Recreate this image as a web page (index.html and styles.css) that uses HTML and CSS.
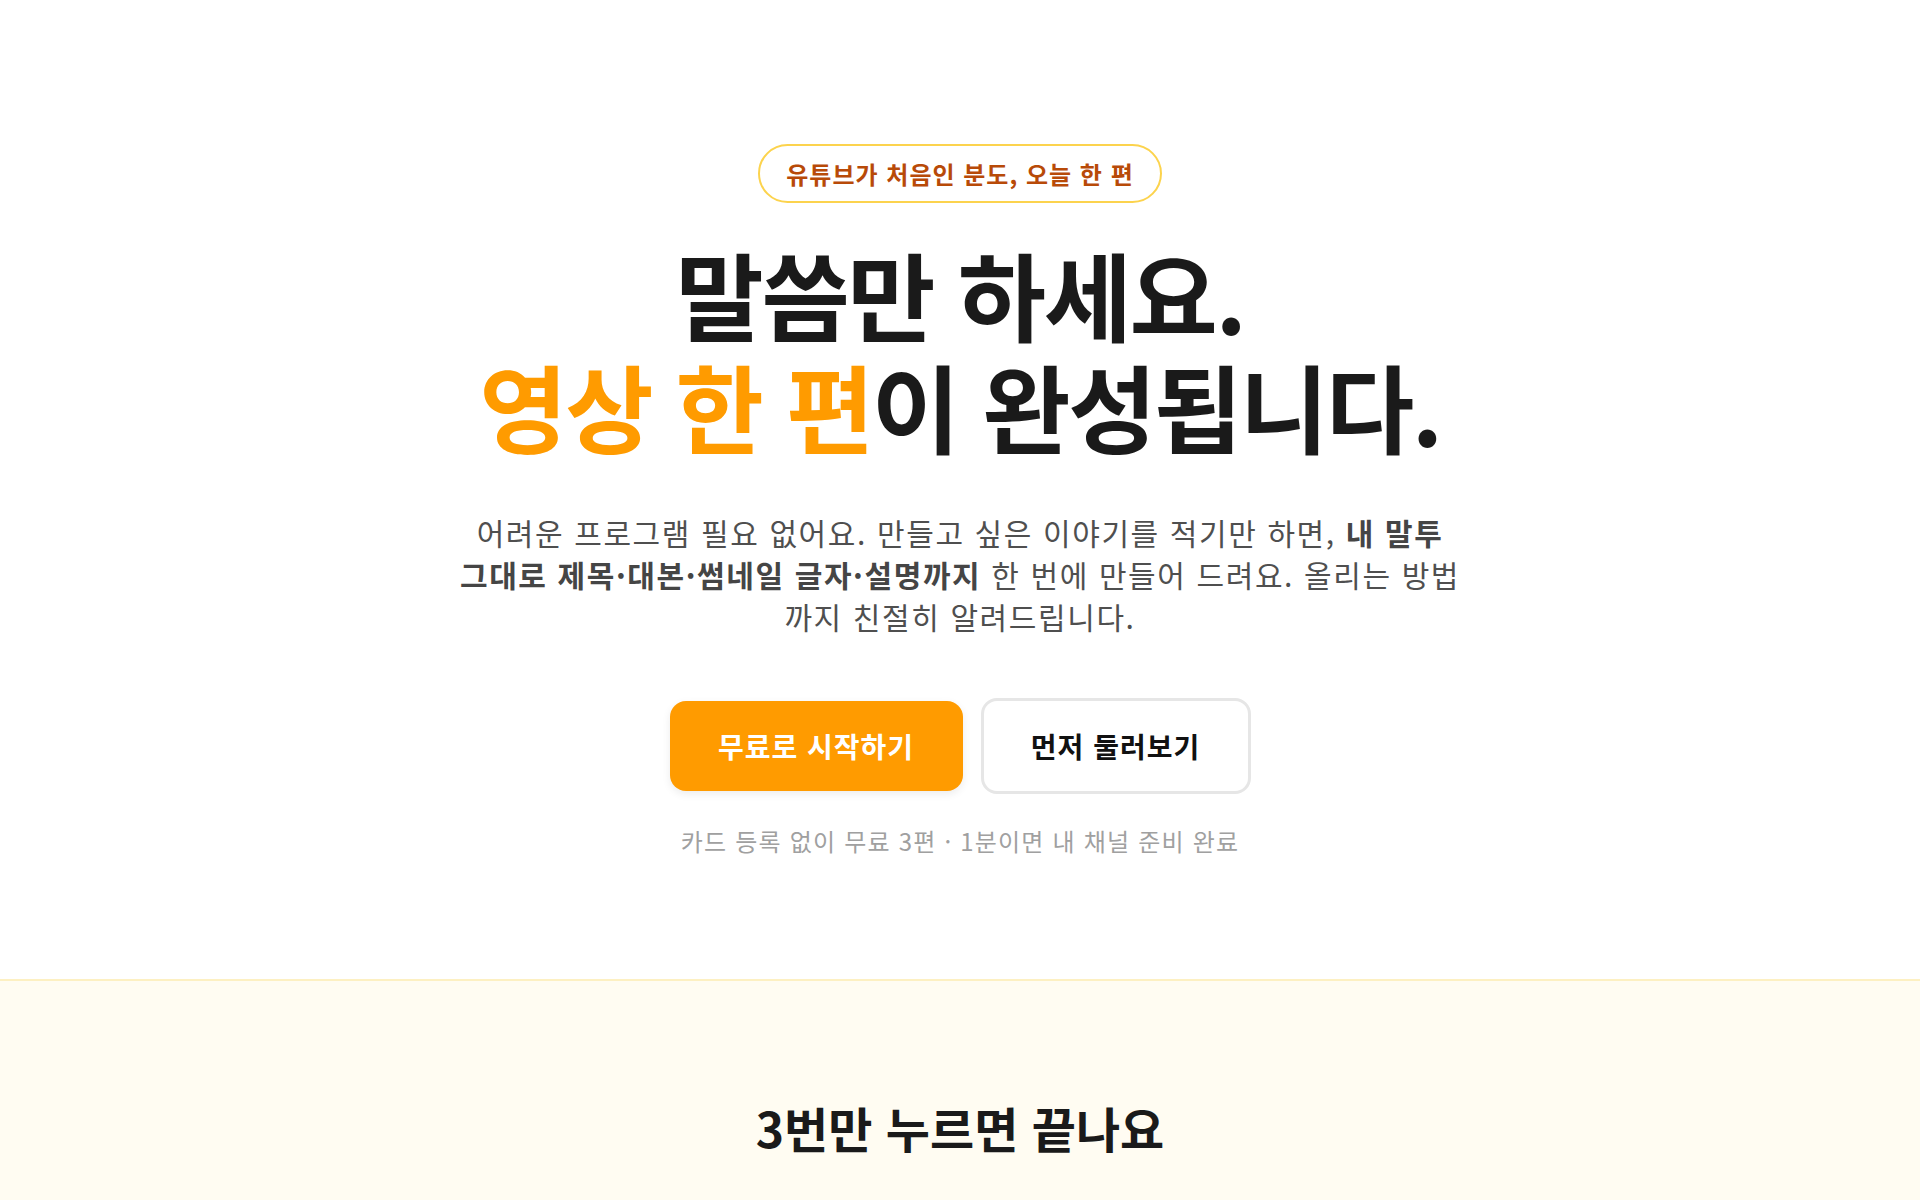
FILE: index.html
```html
<!DOCTYPE html>
<html lang="ko">
<head>
<meta charset="utf-8">
<title>말씀만 하세요</title>
<link rel="stylesheet" href="styles.css">
</head>
<body>
<section class="hero">
  <span class="badge">유튜브가 처음인 분도, 오늘 한 편</span>
  <h1 class="title">말씀만 하세요.<br><span class="accent">영상 한 편</span>이 완성됩니다.</h1>
  <p class="lead">어려운 프로그램 필요 없어요. 만들고 싶은 이야기를 적기만 하면, <strong>내 말투</strong><br><strong>그대로 제목·대본·썸네일 글자·설명까지</strong> 한 번에 만들어 드려요. 올리는 방법<br>까지 친절히 알려드립니다.</p>
  <div class="actions">
    <a class="btn btn-primary" href="#">무료로 시작하기</a>
    <a class="btn btn-outline" href="#">먼저 둘러보기</a>
  </div>
  <p class="note">카드 등록 없이 무료 3편 · 1분이면 내 채널 준비 완료</p>
</section>
<section class="steps">
  <h2 class="steps-title">3번만 누르면 끝나요</h2>
</section>
</body>
</html>
```
FILE: styles.css
```css
* { box-sizing: border-box; }
html, body { margin: 0; padding: 0; }
body {
  font-family: "Noto Sans CJK KR", "Noto Sans", sans-serif;
  color: #1a1a1a;
  background: #fff;
}
.hero {
  display: flex;
  flex-direction: column;
  align-items: center;
  text-align: center;
  padding: 144px 24px 122px;
}
.badge {
  display: inline-block;
  border: 2px solid #fcd34d;
  border-radius: 999px;
  padding: 12px 26px;
  font-size: 24px;
  line-height: 31px;
  letter-spacing: 1px;
  font-weight: 700;
  color: #b84a08;
}
.title {
  margin: 34px 0 0;
  font-size: 96px;
  line-height: 112px;
  font-weight: 700;
  letter-spacing: -0.025em;
  color: #1a1a1a;
}
.accent { color: #ff9b00; }
.lead {
  margin: 50px 0 0;
  max-width: 1200px;
  font-size: 30px;
  line-height: 42px;
  letter-spacing: 1.6px;
  font-weight: 400;
  color: #4f4f4f;
}
.lead strong { font-weight: 700; color: #454545; }
.actions {
  display: flex;
  align-items: center;
  gap: 18px;
  margin-top: 61px;
}
.btn {
  display: inline-flex;
  align-items: center;
  justify-content: center;
  text-decoration: none;
  font-size: 28px;
  letter-spacing: 1px;
  font-weight: 700;
  border-radius: 16px;
}
.btn-primary {
  width: 293px;
  height: 90px;
  background: #ff9b00;
  color: #fff;
  box-shadow: 0 3px 8px rgba(0,0,0,0.08);
}
.btn-outline {
  width: 270px;
  height: 96px;
  background: #fff;
  color: #111;
  border: 3px solid #e6e6e6;
}
.note {
  margin: 30px 0 0;
  font-size: 24px;
  line-height: 33px;
  letter-spacing: 1.2px;
  color: #a0a0a0;
}
.steps {
  background: #fffcf2;
  border-top: 2px solid #fdf0c2;
  padding: 118px 24px 120px;
  text-align: center;
}
.steps-title {
  margin: 0;
  font-size: 48px;
  line-height: 57px;
  font-weight: 700;
  color: #1a1a1a;
}
```
